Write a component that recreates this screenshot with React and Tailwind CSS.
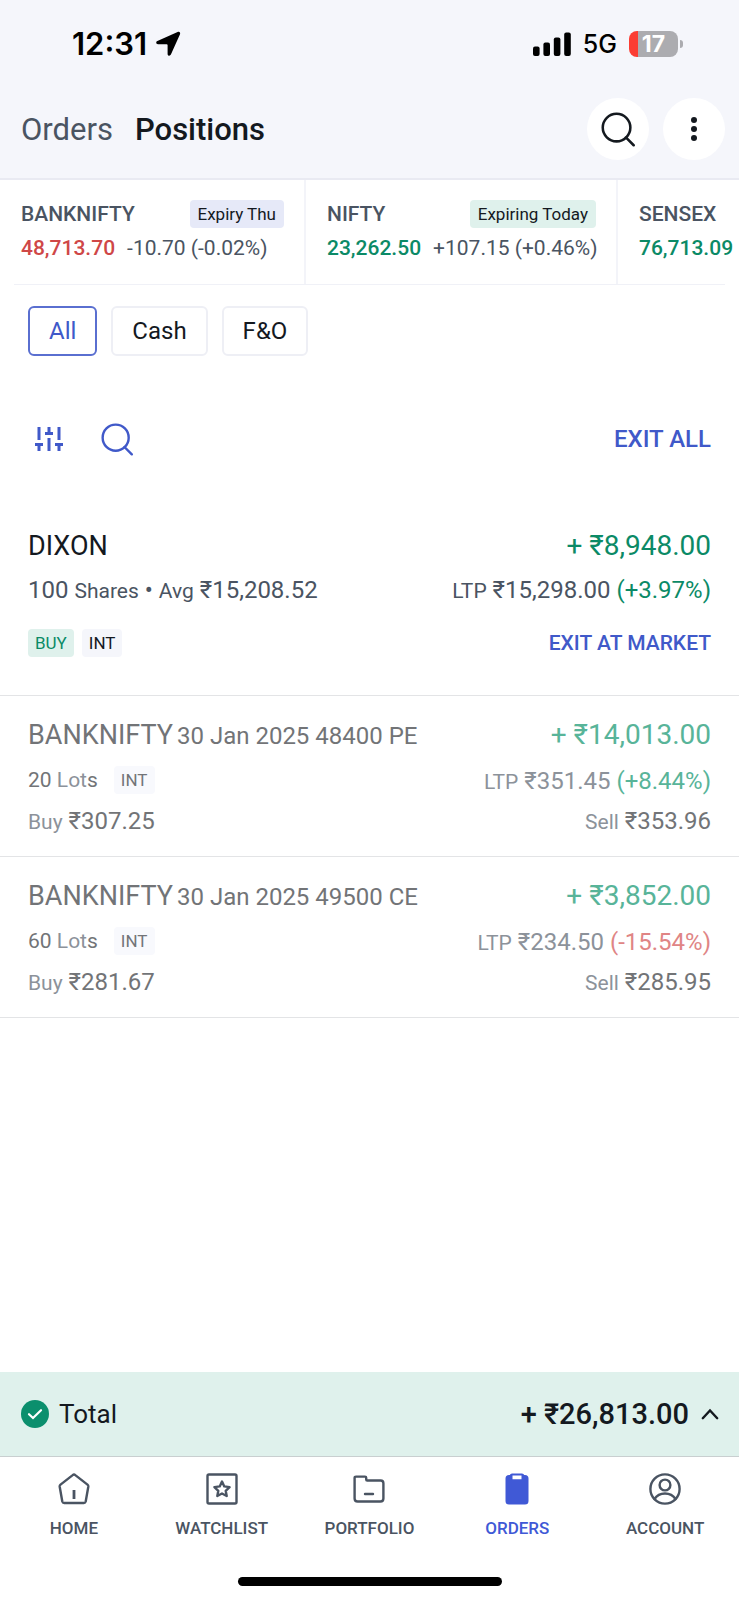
import React from "react";

const tickers = [
  { name: "BANKNIFTY", tag: "Expiry Thu", tagClass: "bg-[#e6e9f8]", price: "48,713.70", change: "-10.70 (-0.02%)", up: false, width: "w-[306px]" },
  { name: "NIFTY", tag: "Expiring Today", tagClass: "bg-[#dff1ec]", price: "23,262.50", change: "+107.15 (+0.46%)", up: true, width: "w-[312px]" },
  { name: "SENSEX", tag: "", tagClass: "", price: "76,713.09", change: "", up: true, width: "w-[312px]" },
];

const closed = [
  { contract: "30 Jan 2025 48400 PE", lots: "20", pnl: "₹14,013.00", ltp: "₹351.45", change: "(+8.44%)", up: true, buy: "₹307.25", sell: "₹353.96" },
  { contract: "30 Jan 2025 49500 CE", lots: "60", pnl: "₹3,852.00", ltp: "₹234.50", change: "(-15.54%)", up: false, buy: "₹281.67", sell: "₹285.95" },
];

function SearchIcon({ className }) {
  return (
    <svg viewBox="0 0 36 36" className={className} fill="none" stroke="currentColor" strokeWidth="2.6" aria-hidden="true">
      <circle cx="16" cy="16" r="14.2" />
      <path d="M25.6 26.2L33.6 34.2" strokeLinecap="round" />
    </svg>
  );
}

function StatusBar() {
  return (
    <div className="flex h-[88px] items-center justify-between pl-[72px] pr-[56px] text-black">
      <div className="flex items-center gap-2">
        <span className="font-['Inter',sans-serif] text-[31px] font-semibold leading-9">12:31</span>
        <svg viewBox="0 0 26 26" className="size-[26px]" aria-hidden="true">
          <path d="M22.6 1.1C24.3.3 25.7 1.6 25 3.3L15.9 23.6C15.1 25.4 12.6 25 12.6 23V14.2C12.6 13.6 12.3 13.3 11.7 13.3H3C1 13.3.6 10.9 2.4 10.1Z" />
        </svg>
      </div>
      <div className="flex items-center">
        <svg viewBox="0 0 38 24" className="h-6 w-[38px]" aria-hidden="true">
          <rect x="0" y="14.5" width="6.6" height="9.5" rx="2" />
          <rect x="10.4" y="10.5" width="6.6" height="13.5" rx="2" />
          <rect x="20.8" y="5.5" width="6.6" height="18.5" rx="2" />
          <rect x="31.2" y="0.5" width="6.6" height="23.5" rx="2" />
        </svg>
        <span className="ml-3 font-['Inter',sans-serif] text-[25px] font-medium leading-8">5G</span>
        <div className="ml-3 flex items-center gap-0.5">
          <div className="flex h-[26px] w-[49px] items-center justify-center overflow-hidden rounded-lg bg-[linear-gradient(to_right,#fb3d33_9px,#acacb0_9px)] font-['Inter',sans-serif] text-[23px] font-bold leading-6 text-white">
            17
          </div>
          <div className="h-2 w-[3px] rounded-r-full bg-[#acacb0]" />
        </div>
      </div>
    </div>
  );
}

function Header() {
  return (
    <header className="border-b-2 border-[#e9eaf2] bg-[#f5f6fb]">
      <StatusBar />
      <div className="flex h-[90px] items-start justify-between pl-[21px] pr-[14px] pt-[10px]">
        <nav className="flex h-16 items-center gap-[22px] text-[31px] leading-9">
          <a href="#orders" className="text-[#4a5462]">Orders</a>
          <a href="#positions" aria-current="page" className="font-medium text-[#14191f]">Positions</a>
        </nav>
        <div className="flex gap-[14px] text-[#14191f]">
          <button type="button" aria-label="Search" className="flex size-[62px] items-center justify-center rounded-full bg-white">
            <SearchIcon className="size-[35px]" />
          </button>
          <button type="button" aria-label="More options" className="flex size-[62px] items-center justify-center rounded-full bg-white">
            <svg viewBox="0 0 8 26" className="h-[26px] w-2" fill="currentColor" aria-hidden="true">
              <circle cx="4" cy="4" r="3" />
              <circle cx="4" cy="13" r="3" />
              <circle cx="4" cy="22" r="3" />
            </svg>
          </button>
        </div>
      </div>
    </header>
  );
}

function Tickers() {
  return (
    <section aria-label="Indices">
      <div className="flex h-[104px] overflow-hidden">
        {tickers.map((t) => (
          <div key={t.name} className={`${t.width} shrink-0 border-r-2 border-[#f3f4f9] pl-[21px] pr-5 pt-5 whitespace-nowrap`}>
            <div className="flex h-7 items-center justify-between">
              <span className="text-[21px] font-medium leading-6 text-[#4a5462]">{t.name}</span>
              {t.tag && <span className={`rounded-sm px-2 text-[17px] leading-7 text-[#14191f] ${t.tagClass}`}>{t.tag}</span>}
            </div>
            <div className="mt-2 flex gap-3 text-[21px] leading-6">
              <span className={`font-medium ${t.up ? "text-[#0b8a66]" : "text-[#cf4747]"}`}>{t.price}</span>
              <span className="text-[#4a5462]">{t.change}</span>
            </div>
          </div>
        ))}
      </div>
      <div className="mx-[14px] h-px bg-[#f0f1f7]" />
    </section>
  );
}

function Filters() {
  const base = "h-[50px] rounded-md text-[24px] leading-7";
  return (
    <div className="flex gap-[14px] px-7 pt-[21px]">
      <button type="button" aria-pressed="true" className={`${base} border-2 px-[19px] border-[#5a6fd0] text-[#4059c9]`}>All</button>
      <button type="button" aria-pressed="false" className={`${base} border-2 px-[19px] border-[#eeeff5] text-[#14191f]`}>Cash</button>
      <button type="button" aria-pressed="false" className={`${base} border-2 px-[19px] border-[#eeeff5] text-[#14191f]`}>F&amp;O</button>
    </div>
  );
}

function Toolbar() {
  return (
    <div className="flex h-[166px] items-center justify-between px-7 text-[#4059c9]">
      <div className="flex items-center gap-[37px] pl-[6px]">
        <button type="button" aria-label="Filter">
          <svg viewBox="0 0 30 26" className="h-[26px] w-[30px]" fill="none" stroke="currentColor" strokeWidth="3" aria-hidden="true">
            <path d="M5 1V14M5 18V25M1 18.5H9M15 1V7M11 7.5H19M15 12V25M25 1V14M25 18V25M21 18.5H29" />
          </svg>
        </button>
        <button type="button" aria-label="Search positions">
          <SearchIcon className="size-[33px]" />
        </button>
      </div>
      <button type="button" className="text-[24px] font-medium leading-7">EXIT ALL</button>
    </div>
  );
}

function OpenPosition() {
  return (
    <article className="flex justify-between border-b border-[#e3e4e6] px-7 pb-[38px] pt-[6px]">
      <div>
        <h2 className="text-[27px] leading-9 text-[#14191f]">DIXON</h2>
        <p className="mt-[10px] text-[24px] leading-8 text-[#4a5462]">
          100 <span className="text-[21px]">Shares</span> • <span className="text-[21px]">Avg</span> ₹15,208.52
        </p>
        <div className="mt-[22px] flex gap-2 text-[17px] leading-7">
          <span className="rounded-sm bg-[#dff1ec] px-[7px] text-[#0b8a66]">BUY</span>
          <span className="rounded-sm bg-[#f5f6fb] px-[7px] text-[#14191f]">INT</span>
        </div>
      </div>
      <div className="flex flex-col items-end">
        <p className="text-[28px] leading-9 text-[#0b8a66]">+ ₹8,948.00</p>
        <p className="mt-[10px] text-[24px] leading-8 text-[#4a5462]">
          <span className="text-[21px]">LTP</span> ₹15,298.00 <span className="text-[#0b8a66]">(+3.97%)</span>
        </p>
        <button type="button" className="mt-[22px] text-[21px] font-medium leading-7 text-[#4059c9]">EXIT AT MARKET</button>
      </div>
    </article>
  );
}

function ClosedPosition({ p }) {
  return (
    <article className="flex h-[161px] justify-between border-b border-[#e3e4e6] px-7 pt-[21px] text-[24px] text-[#727477]">
      <div>
        <h2 className="flex items-baseline gap-1 leading-9">
          <span className="text-[27px]">BANKNIFTY</span>
          <span>{p.contract}</span>
        </h2>
        <p className="mt-3 flex items-center text-[21px] leading-7">
          <span>{p.lots} <span className="text-[#8c929a]">Lot</span>s</span>
          <span className="ml-4 rounded-sm bg-[#f8f9fd] px-[7px] text-[17px]">INT</span>
        </p>
        <p className="mt-[11px] leading-8"><span className="text-[21px] text-[#8c929a]">Buy</span> {p.buy}</p>
      </div>
      <div className="text-right">
        <p className="text-[28px] leading-9 text-[#58b499]">+ {p.pnl}</p>
        <p className="mt-3 leading-8 text-[#8c929a]">
          <span className="text-[21px]">LTP</span> {p.ltp} <span className={p.up ? "text-[#58b499]" : "text-[#e08585]"}>{p.change}</span>
        </p>
        <p className="mt-[7px] leading-8"><span className="text-[21px] text-[#8c929a]">Sell</span> {p.sell}</p>
      </div>
    </article>
  );
}

const icons = {
  HOME: (
    <>
      <path d="M14.7 2.1Q16 1 17.3 2.1L29.5 11.6Q30.5 12.5 30.3 13.8L27.7 28.5Q27.3 30 25.8 30H6.2Q4.7 30 4.3 28.5L1.7 13.8Q1.5 12.5 2.5 11.6Z" />
      <path d="M16 17V26" strokeWidth="2.8" strokeLinecap="butt" />
    </>
  ),
  WATCHLIST: (
    <>
      <rect x="1.5" y="1.5" width="29" height="29" rx="1.5" />
      <path d="M16 8.6L18.3 13.4L23.6 14.1L19.7 17.8L20.7 23L16 20.5L11.3 23L12.3 17.8L8.4 14.1L13.7 13.4Z" />
    </>
  ),
  PORTFOLIO: (
    <>
      <path d="M1.6 5V25.5Q1.6 28.5 4.6 28.5H27.4Q30.4 28.5 30.4 25.5V10.2Q30.4 7.5 27.7 7.5H14.2Q13.2 7.5 13.2 6.5V4.8Q13.2 3.6 12 3.6H3Q1.6 3.6 1.6 5Z" />
      <path d="M12 21H20" />
    </>
  ),
  ORDERS: (
    <>
      <path fillRule="evenodd" stroke="none" fill="currentColor" d="M11 .5H21Q22.7.5 23.2 2H24Q27.5 2 27.5 5.5V28Q27.5 31.5 24 31.5H8Q4.5 31.5 4.5 28V5.5Q4.5 2 8 2H8.8Q9.3.5 11 .5ZM11.5 2.6V6.2H20.5V2.6Z" />
    </>
  ),
  ACCOUNT: (
    <>
      <circle cx="16" cy="16" r="14.6" />
      <circle cx="16" cy="12" r="5.4" />
      <path d="M5.5 26Q9 20.5 16 20.5T26.5 26" />
    </>
  ),
};

function Footer() {
  return (
    <footer className="sticky bottom-0 mt-auto bg-white">
      <div className="flex h-[84px] items-center justify-between bg-[#dff1ec] pl-[21px] pr-5 text-[#14191f]">
        <div className="flex items-center gap-[10px]">
          <svg viewBox="0 0 28 28" className="size-7" aria-hidden="true">
            <circle cx="14" cy="14" r="14" fill="#0b8f6d" />
            <path d="M8 14.2L12 18L20 10.2" fill="none" stroke="#fff" strokeWidth="2.2" strokeLinecap="round" />
          </svg>
          <span className="text-[26px] leading-8">Total</span>
        </div>
        <button type="button" aria-label="Expand total" className="flex items-center gap-3 text-[29px] font-medium leading-9">
          <span>+ ₹26,813.00</span>
          <svg viewBox="0 0 18 12" className="h-3 w-[18px]" fill="none" stroke="currentColor" strokeWidth="2.4" strokeLinecap="round" aria-hidden="true">
            <path d="M1.8 10.2L9 2.4L16.2 10.2" />
          </svg>
        </button>
      </div>
      <nav aria-label="Main" className="grid grid-cols-5 border-t border-[#c9cfd0] pt-4">
        {Object.keys(icons).map((name) => (
          <a
            key={name}
            href={`#${name.toLowerCase()}`}
            aria-current={name === "ORDERS" ? "page" : undefined}
            className={`flex flex-col items-center gap-[11px] text-[17px] font-medium leading-6 ${name === "ORDERS" ? "text-[#4059d6]" : "text-[#4a5462]"}`}
          >
            <svg viewBox="0 0 32 32" className="size-8" fill="none" stroke="currentColor" strokeWidth="2.4" strokeLinecap="round" strokeLinejoin="round" aria-hidden="true">
              {icons[name]}
            </svg>
            {name}
          </a>
        ))}
      </nav>
      <div className="mx-auto mb-[14px] mt-[37px] h-[9px] w-[264px] rounded-full bg-black" />
    </footer>
  );
}

export default function App() {
  return (
    <div className="flex min-h-screen flex-col bg-white font-['Roboto',sans-serif]">
      <Header />
      <Tickers />
      <main>
        <Filters />
        <Toolbar />
        <OpenPosition />
        {closed.map((p) => (
          <ClosedPosition key={p.contract} p={p} />
        ))}
      </main>
      <Footer />
    </div>
  );
}
